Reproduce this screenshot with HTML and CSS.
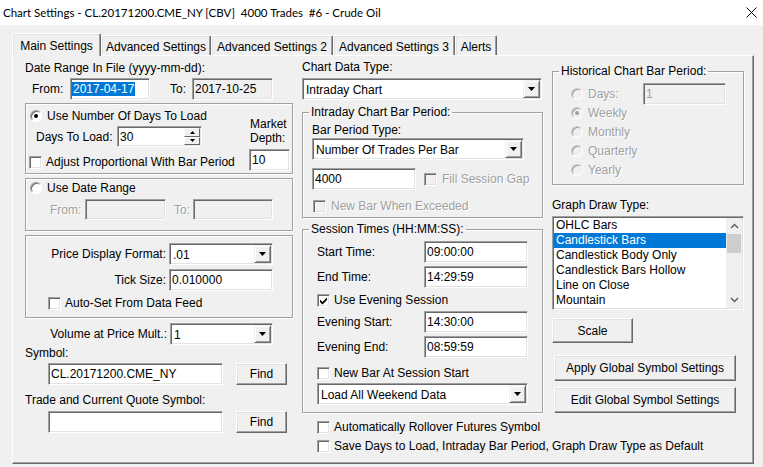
FILE: index.html
```html
<!DOCTYPE html>
<html>
<head>
<meta charset="utf-8">
<title>Chart Settings</title>
<link rel="stylesheet" href="styles.css">
</head>
<body>
<div class="titlebar">
  <span class="title">Chart Settings - CL.20171200.CME_NY [CBV]&nbsp; 4000 Trades&nbsp; #6 - Crude Oil</span>
  <svg class="close" width="11" height="11" viewBox="0 0 11 11"><path d="M0.5 0.5 L10.5 10.5 M10.5 0.5 L0.5 10.5" stroke="#000" stroke-width="1" fill="none"/></svg>
</div>
<div class="tabs">
  <div class="tab sel t1">Main Settings</div>
  <div class="tab t2">Advanced Settings</div>
  <div class="tab t3">Advanced Settings 2</div>
  <div class="tab t4">Advanced Settings 3</div>
  <div class="tab t5">Alerts</div>
</div>
<div class="panel">
  <!-- LEFT COLUMN -->
  <div class="col left">
    <div class="lbl l-date">Date Range In File (yyyy-mm-dd):</div>
    <div class="row daterow">
      <span class="lbl lfrom">From:</span>
      <div class="edit w80 tight"><span class="hl">2017-04-17</span></div>
      <span class="lbl lto">To:</span>
      <div class="edit dis w81">2017-10-25</div>
    </div>
    <div class="grp g1">
      <div class="g1-main">
        <div class="opt o-days"><span class="radio on"></span>Use Number Of Days To Load</div>
        <div class="row daysrow">
          <span class="lbl ldays">Days To Load:</span>
          <div class="edit spin">30
            <div class="spinbtns">
              <span class="sbtn"><svg width="5" height="3" viewBox="0 0 5 3"><path d="M2.5 0L5 3H0z" fill="#000"/></svg></span>
              <span class="sbtn"><svg width="5" height="3" viewBox="0 0 5 3"><path d="M0 0H5L2.5 3z" fill="#000"/></svg></span>
            </div>
          </div>
        </div>
        <div class="opt o-adj"><span class="check"></span>Adjust Proportional With Bar Period</div>
      </div>
      <div class="g1-side">
        <div class="lbl lmd">Market<br>Depth:</div>
        <div class="edit w41">10</div>
      </div>
    </div>
    <div class="grp g2">
      <div class="opt o-range"><span class="radio"></span>Use Date Range</div>
      <div class="row rangerow">
        <span class="lbl dislbl lrfrom">From:</span>
        <div class="edit dis w81"></div>
        <span class="lbl dislbl lrto">To:</span>
        <div class="edit dis w80"></div>
      </div>
    </div>
    <div class="grp g3">
      <div class="row frow r-pdf">
        <span class="lbl rl">Price Display Format:</span>
        <div class="combo w104"><span class="ctext">.01</span><span class="ddbtn"><svg width="7" height="4" viewBox="0 0 7 4"><path d="M0 0H7L3.5 4z" fill="#000"/></svg></span></div>
      </div>
      <div class="row frow r-tick">
        <span class="lbl rl">Tick Size:</span>
        <div class="edit w104">0.010000</div>
      </div>
      <div class="opt o-auto"><span class="check"></span>Auto-Set From Data Feed</div>
    </div>
    <div class="row vrow">
      <span class="lbl rl2">Volume at Price Mult.:</span>
      <div class="combo w103"><span class="ctext">1</span><span class="ddbtn"><svg width="7" height="4" viewBox="0 0 7 4"><path d="M0 0H7L3.5 4z" fill="#000"/></svg></span></div>
    </div>
    <div class="lbl l-sym">Symbol:</div>
    <div class="row symrow">
      <div class="edit w175">CL.20171200.CME_NY</div>
      <div class="btn find">Find</div>
    </div>
    <div class="lbl l-tq">Trade and Current Quote Symbol:</div>
    <div class="row symrow2">
      <div class="edit w175"></div>
      <div class="btn find">Find</div>
    </div>
  </div>

  <!-- MIDDLE COLUMN -->
  <div class="col mid">
    <div class="lbl l-cdt">Chart Data Type:</div>
    <div class="combo w240 c-cdt"><span class="ctext">Intraday Chart</span><span class="ddbtn"><svg width="7" height="4" viewBox="0 0 7 4"><path d="M0 0H7L3.5 4z" fill="#000"/></svg></span></div>
    <fieldset class="fs fs1">
      <legend>Intraday Chart Bar Period:</legend>
      <div class="fsbody fb1">
        <div class="lbl l-bpt">Bar Period Type:</div>
        <div class="combo w212 c-bpt"><span class="ctext">Number Of Trades Per Bar</span><span class="ddbtn"><svg width="7" height="4" viewBox="0 0 7 4"><path d="M0 0H7L3.5 4z" fill="#000"/></svg></span></div>
        <div class="row r4000">
          <div class="edit w104">4000</div>
          <div class="opt o-fill dislbl"><span class="check dis"></span>Fill Session Gap</div>
        </div>
        <div class="opt o-nbwe dislbl"><span class="check dis"></span>New Bar When Exceeded</div>
      </div>
    </fieldset>
    <fieldset class="fs fs2">
      <legend>Session Times (HH:MM:SS):</legend>
      <div class="fsbody fb2">
        <div class="row trow r-st"><span class="lbl tl">Start Time:</span><div class="edit w104">09:00:00</div></div>
        <div class="row trow r-et"><span class="lbl tl">End Time:</span><div class="edit w104">14:29:59</div></div>
        <div class="opt o-ues"><span class="check"><svg width="9" height="9" viewBox="0 0 9 9"><path d="M1 3.5 L3.5 6 L8 1.5 L8 4 L3.5 8.5 L1 6z" fill="#000"/></svg></span>Use Evening Session</div>
        <div class="row trow r-es"><span class="lbl tl">Evening Start:</span><div class="edit w104">14:30:00</div></div>
        <div class="row trow r-ee"><span class="lbl tl">Evening End:</span><div class="edit w104">08:59:59</div></div>
        <div class="opt o-nbss"><span class="check"></span>New Bar At Session Start</div>
        <div class="combo w211 c-law"><span class="ctext">Load All Weekend Data</span><span class="ddbtn"><svg width="7" height="4" viewBox="0 0 7 4"><path d="M0 0H7L3.5 4z" fill="#000"/></svg></span></div>
      </div>
    </fieldset>
    <div class="opt o-roll"><span class="check"></span>Automatically Rollover Futures Symbol</div>
    <div class="opt o-save"><span class="check"></span>Save Days to Load, Intraday Bar Period, Graph Draw Type as Default</div>
  </div>

  <!-- RIGHT COLUMN -->
  <div class="col right">
    <fieldset class="fs fs3">
      <legend>Historical Chart Bar Period:</legend>
      <div class="fsbody fb3">
        <div class="row hdays">
          <div class="opt dislbl hd-l"><span class="radio dis"></span>Days:</div>
          <div class="edit dis distext w83">1</div>
        </div>
        <div class="opt hopt dislbl h-first"><span class="radio dis on"></span>Weekly</div>
        <div class="opt hopt dislbl"><span class="radio dis"></span>Monthly</div>
        <div class="opt hopt dislbl"><span class="radio dis"></span>Quarterly</div>
        <div class="opt hopt dislbl"><span class="radio dis"></span>Yearly</div>
      </div>
    </fieldset>
    <div class="lbl l-gdt">Graph Draw Type:</div>
    <div class="listbox">
      <div class="items">
        <div class="item">OHLC Bars</div>
        <div class="item selitem">Candlestick Bars</div>
        <div class="item">Candlestick Body Only</div>
        <div class="item">Candlestick Bars Hollow</div>
        <div class="item">Line on Close</div>
        <div class="item">Mountain</div>
      </div>
      <div class="vscroll">
        <div class="arrow"><svg width="9" height="6" viewBox="0 0 9 6"><path d="M1 5 L4.5 1.5 L8 5" stroke="#606060" stroke-width="1.5" fill="none"/></svg></div>
        <div class="thumb"></div>
        <div class="track"></div>
        <div class="arrow"><svg width="9" height="6" viewBox="0 0 9 6"><path d="M1 1 L4.5 4.5 L8 1" stroke="#606060" stroke-width="1.5" fill="none"/></svg></div>
      </div>
    </div>
    <div class="btn b-scale">Scale</div>
    <div class="btn b-wide b-apply">Apply Global Symbol Settings</div>
    <div class="btn b-wide b-edit">Edit Global Symbol Settings</div>
  </div>
</div>
</body>
</html>
```

FILE: styles.css
```css
* { box-sizing: border-box; }
html, body { margin: 0; padding: 0; }
body {
  width: 763px;
  height: 467px;
  overflow: hidden;
  background: #f0f0f0;
  font-family: "Liberation Sans", Arial, sans-serif;
  font-size: 12px;
  line-height: 14px;
  color: #000;
}

/* title bar */
.titlebar {
  height: 25px;
  background: #fff;
  display: flex;
  align-items: center;
  justify-content: space-between;
  padding: 0 6px 0 3px;
}
.title {
  font-family: Lato, "Liberation Sans", sans-serif;
  font-size: 11.5px;
  line-height: 16px;
}
.close { display: block; }

/* tabs */
.tabs {
  height: 30px;
  display: flex;
  align-items: flex-end;
  padding-left: 12px;
}
.tab {
  height: 20px;
  padding-top: 4px;
  text-align: center;
  border-top: 1px solid #fff;
  border-left: 1px solid #fff;
  border-right: 1px solid #696969;
  box-shadow: inset -1px 0 0 #a0a0a0, inset 1px 1px 0 #e3e3e3;
  border-radius: 2px 2px 0 0;
  white-space: nowrap;
}
.tab.sel {
  height: 23px;
  padding-top: 5px;
  margin-bottom: -1px;
  position: relative;
  z-index: 2;
  background: #f0f0f0;
}
.t1 { width: 89px; }
.t2 { width: 110px; }
.t3 { width: 122px; }
.t4 { width: 122px; }
.t5 { width: 42px; }

/* panel */
.panel {
  margin-left: 12px;
  width: 742px;
  height: 409px;
  border: 1px solid;
  border-color: #fff #696969 #696969 #fff;
  box-shadow: inset -1px -1px 0 #a0a0a0;
  padding-left: 12px;
  display: flex;
  align-items: flex-start;
}
.col { display: flex; flex-direction: column; align-items: flex-start; }
.left { width: 268px; }
.mid { width: 241px; margin-left: 9px; }
.right { width: 192px; margin-left: 9px; }

.lbl { white-space: nowrap; }
.dislbl { color: #a0a0a0; text-shadow: 1px 1px 0 #fff; }
.row { display: flex; align-items: center; }

/* sunken edit */
.edit {
  height: 22px;
  background: #fff;
  border: 1px solid;
  border-color: #a0a0a0 #fff #fff #a0a0a0;
  box-shadow: inset 1px 1px 0 #696969, inset -1px -1px 0 #e3e3e3;
  padding-left: 2px;
  display: flex;
  align-items: center;
  white-space: nowrap;
  flex: none;
}
.edit.tight { padding-left: 1px; }
.edit.dis { background: #f0f0f0; }
.edit.distext { color: #a0a0a0; }
.hl { background: #0078d7; color: #fff; line-height: 14px; padding: 0 1px; }

.w41 { width: 41px; }
.w80 { width: 80px; }
.w81 { width: 81px; }
.w83 { width: 83px; }
.w103 { width: 103px; }
.w104 { width: 104px; }
.w175 { width: 175px; }
.w211 { width: 211px; }
.w212 { width: 212px; }
.w240 { width: 240px; }

/* combo box */
.combo {
  height: 22px;
  background: #fff;
  border: 1px solid;
  border-color: #a0a0a0 #fff #fff #a0a0a0;
  box-shadow: inset 1px 1px 0 #696969, inset -1px -1px 0 #e3e3e3;
  padding: 1px 1px 1px 3px;
  display: flex;
  align-items: center;
  flex: none;
}
.ctext { flex: 1; white-space: nowrap; padding-top: 1px; }
.ddbtn {
  width: 17px;
  height: 18px;
  background: #f0f0f0;
  border: 1px solid;
  border-color: #f0f0f0 #696969 #696969 #f0f0f0;
  box-shadow: inset 1px 1px 0 #fff, inset -1px -1px 0 #a0a0a0;
  display: flex;
  align-items: center;
  justify-content: center;
}
.ddbtn svg { display: block; }

/* buttons */
.btn {
  background: #f0f0f0;
  border: 1px solid;
  border-color: #fff #696969 #696969 #fff;
  box-shadow: inset -1px -1px 0 #a0a0a0, inset 1px 1px 0 #e3e3e3;
  display: flex;
  align-items: center;
  justify-content: center;
  white-space: nowrap;
  flex: none;
}

/* checkbox and radio */
.opt { display: flex; align-items: center; height: 14px; white-space: nowrap; }
.check {
  width: 13px;
  height: 13px;
  flex: none;
  margin-right: 4px;
  background: #fff;
  border: 1px solid;
  border-color: #a0a0a0 #fff #fff #a0a0a0;
  box-shadow: inset 1px 1px 0 #696969, inset -1px -1px 0 #e3e3e3;
  display: flex;
  align-items: center;
  justify-content: center;
}
.check.dis { background: #f0f0f0; }
.check svg { display: block; }
.radio {
  width: 12px;
  height: 12px;
  flex: none;
  margin-right: 5px;
  border-radius: 50%;
  background: #fff;
  border: 1px solid;
  border-color: #a0a0a0 #fff #fff #a0a0a0;
  box-shadow: inset 1px 1px 0 #696969;
  display: flex;
  align-items: center;
  justify-content: center;
}
.radio.on::after {
  content: "";
  width: 4px;
  height: 4px;
  border-radius: 50%;
  background: #000;
}
.radio.dis { background: #f0f0f0; box-shadow: inset 1px 1px 0 #a0a0a0; border-color: #c8c8c8 #fff #fff #c8c8c8; }
.radio.dis.on::after { background: #a0a0a0; }

/* group boxes */
.grp {
  width: 268px;
  border: 1px solid #a0a0a0;
  box-shadow: inset 1px 1px 0 #fff, 1px 1px 0 #fff;
}
.fs {
  margin: 0;
  padding: 0;
  border: 1px solid #a0a0a0;
  box-shadow: inset 1px 1px 0 #fff, 1px 1px 0 #fff;
  min-width: 0;
}
.fs legend {
  margin-left: 6px;
  padding: 0 2px;
  line-height: 14px;
  height: 14px;
}
.fsbody { display: flex; flex-direction: column; align-items: flex-start; }

/* LEFT column details */
.l-date { margin-top: 5px; }
.daterow { margin-top: 3px; height: 22px; }
.lfrom { margin-left: 7px; width: 38px; }
.lto { margin-left: 20px; width: 22px; }

.g1 { margin-top: 3px; height: 71px; display: flex; padding-left: 4px; }
.g1-main { display: flex; flex-direction: column; align-items: flex-start; }
.o-days { margin-top: 5px; }
.daysrow { margin-top: 3px; height: 21px; }
.ldays { margin-left: 6px; width: 81px; }
.spin { width: 85px; height: 21px; padding-right: 1px; }
.spinbtns {
  margin-left: auto;
  width: 16px;
  height: 17px;
  display: flex;
  flex-direction: column;
}
.sbtn {
  flex: 1;
  background: #f0f0f0;
  border: 1px solid;
  border-color: #fff #696969 #696969 #fff;
  display: flex;
  align-items: center;
  justify-content: center;
}
.sbtn svg { display: block; }
.o-adj { margin-top: 8px; margin-left: -1px; }
.g1-side { margin-left: auto; margin-right: 2px; width: 41px; display: flex; flex-direction: column; }
.lmd { margin-top: 13px; margin-left: 1px; line-height: 14px; }
.g1-side .edit { margin-top: 4px; }

.g2 { margin-top: 4px; height: 53px; padding-left: 4px; display: flex; flex-direction: column; }
.o-range { margin-top: 2px; }
.rangerow { margin-top: 4px; height: 21px; }
.rangerow .edit { height: 21px; }
.lrfrom { margin-left: 20px; width: 35px; }
.lrto { margin-left: 8px; width: 19px; }

.g3 { margin-top: 4px; height: 83px; display: flex; flex-direction: column; }
.frow { height: 22px; }
.r-pdf { margin-top: 7px; }
.r-tick { margin-top: 4px; }
.rl { width: 140px; text-align: right; margin-right: 3px; }
.o-auto { margin-top: 5px; margin-left: 22px; }

.vrow { margin-top: 5px; height: 22px; }
.rl2 { width: 142px; text-align: right; margin-right: 3px; }
.l-sym { margin-top: 1px; }
.symrow { margin-top: 3px; margin-left: 23px; }
.l-tq { margin-top: 8px; }
.symrow2 { margin-top: 4px; margin-left: 23px; }
.find { width: 51px; height: 22px; margin-left: 13px; }

/* MIDDLE column */
.l-cdt { margin-top: 4px; }
.c-cdt { margin-top: 4px; }
.fs1 { margin-top: 5px; width: 241px; }
.fb1 { padding: 0 0 4px 9px; }
.l-bpt { margin-top: 4px; }
.c-bpt { margin-top: 1px; }
.r4000 { margin-top: 8px; }
.o-fill { margin-left: 8px; }
.o-fill .check { margin-right: 5px; }
.o-nbwe { margin-top: 9px; margin-left: 1px; }
.o-nbwe .check { margin-right: 5px; }

.fs2 { margin-top: 4px; width: 241px; }
.fb2 { padding: 0 0 7px 14px; }
.trow { height: 22px; }
.tl { width: 107px; }
.r-st { margin-top: 5px; }
.r-et { margin-top: 3px; }
.o-ues { margin-top: 5px; }
.r-es { margin-top: 4px; }
.r-ee { margin-top: 3px; }
.o-nbss { margin-top: 8px; }
.c-law { margin-top: 3px; }
.o-roll { margin-top: 7px; margin-left: 15px; }
.o-save { margin-top: 5px; margin-left: 15px; }

/* RIGHT column */
.fs3 { margin-top: 8px; width: 192px; }
.fb3 { padding: 0 0 5px 18px; }
.hdays { margin-top: 5px; height: 22px; }
.hd-l { width: 72px; }
.hopt { height: 19px; }
.h-first { margin-top: -2px; }
.l-gdt { margin-top: 13px; }
.listbox {
  margin-top: 4px;
  width: 192px;
  height: 94px;
  background: #fff;
  border: 1px solid;
  border-color: #a0a0a0 #fff #fff #a0a0a0;
  box-shadow: inset 1px 1px 0 #696969, inset -1px -1px 0 #e3e3e3;
  padding: 1px;
  display: flex;
}
.items { flex: 1; }
.item { height: 15px; line-height: 15px; padding-left: 2px; white-space: nowrap; }
.selitem { background: #0078d7; color: #fff; }
.vscroll {
  width: 16px;
  background: #f0f0f0;
  display: flex;
  flex-direction: column;
}
.arrow { height: 16px; display: flex; align-items: center; justify-content: center; }
.arrow svg { display: block; }
.thumb { height: 19px; background: #cdcdcd; margin: 0 1px; }
.track { flex: 1; }
.b-scale { margin-top: 8px; width: 81px; height: 25px; }
.b-wide { width: 182px; height: 26px; margin-left: 2px; }
.b-apply { margin-top: 12px; }
.b-edit { margin-top: 6px; }
```
